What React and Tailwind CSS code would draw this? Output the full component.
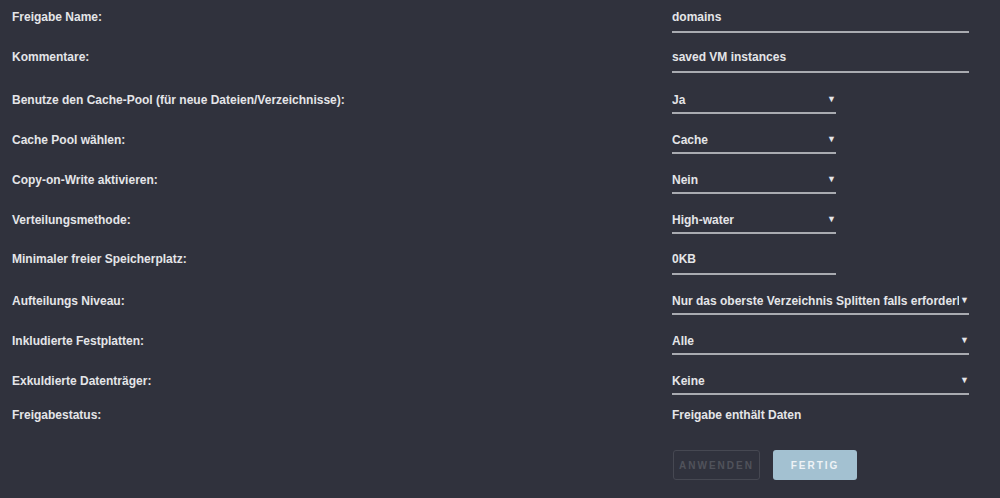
const rows = [
  { label: 'Freigabe Name:', value: 'domains', kind: 'text', wide: true },
  { label: 'Kommentare:', value: 'saved VM instances', kind: 'text', wide: true },
  { label: 'Benutze den Cache-Pool (für neue Dateien/Verzeichnisse):', value: 'Ja', kind: 'select' },
  { label: 'Cache Pool wählen:', value: 'Cache', kind: 'select' },
  { label: 'Copy-on-Write aktivieren:', value: 'Nein', kind: 'select' },
  { label: 'Verteilungsmethode:', value: 'High-water', kind: 'select' },
  { label: 'Minimaler freier Speicherplatz:', value: '0KB', kind: 'text' },
  { label: 'Aufteilungs Niveau:', value: 'Nur das oberste Verzeichnis Splitten falls erforderlich', kind: 'select', wide: true },
  { label: 'Inkludierte Festplatten:', value: 'Alle', kind: 'select', wide: true },
  { label: 'Exkuldierte Datenträger:', value: 'Keine', kind: 'select', wide: true },
]

function Field({ row }) {
  return (
    <div
      className={`mt-[2px] flex h-[31px] items-center overflow-hidden border-b-2 border-[#a9abb1] ${row.wide ? 'w-[297px]' : 'w-[164px]'} ${row.kind === 'select' ? 'pt-[4px]' : ''}`}
    >
      <span className="min-w-0 flex-1 overflow-hidden whitespace-nowrap">{row.value}</span>
      {row.kind === 'select' ? <span className="ml-[1px] shrink-0 text-[9px] leading-none">▼</span> : null}
    </div>
  )
}

export default function App() {
  return (
    <div
      className="min-h-[498px] w-[1000px] bg-[#30323d] text-[12px] font-bold text-[#e4e5e8]"
      style={{ fontFamily: '"Liberation Sans", Arial, sans-serif' }}
    >
      {rows.map((row, i) => (
        <div key={row.label} className={`flex items-start ${i === 1 || i === 5 ? 'h-[41px]' : 'h-10'}`}>
          <div className={`w-[672px] pl-3 leading-4 ${row.kind === 'select' ? 'mt-[11px]' : 'mt-[9px]'}`}>{row.label}</div>
          <Field row={row} />
        </div>
      ))}
      <div className="flex h-9 items-start">
        <div className="mt-[5px] w-[672px] pl-3 leading-4">Freigabestatus:</div>
        <div className="mt-[5px] leading-4">Freigabe enthält Daten</div>
      </div>
      <div className="flex gap-[13px] pl-[673px] pt-[12px]">
        <button className="h-[30px] w-[87px] rounded-[3px] border border-[#464852] text-[10px] font-bold tracking-[0.2em] text-[#50525b]">
          ANWENDEN
        </button>
        <button className="h-[30px] w-[84px] rounded-[3px] bg-[#a3c1d1] text-[10px] font-bold tracking-[0.2em] text-[#eef3f6]">
          FERTIG
        </button>
      </div>
    </div>
  )
}
